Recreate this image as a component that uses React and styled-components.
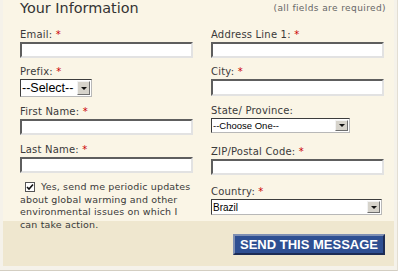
import React from 'react';
import styled, {createGlobalStyle} from 'styled-components';

const GlobalStyle = createGlobalStyle`
	body {
		margin: 0;
		background: #fff;
		font-family: "DejaVu Sans", Verdana, sans-serif;
	}
`;

const Panel = styled.div`
	width: 398px;
	box-sizing: border-box;
	background: #f5f2ea;
	padding: 0 3px 4px 3px;
	border-right: 1px solid #e3ded2;
	border-bottom: 1px solid #d3cec2;
`;

const Main = styled.div`
	background: #faf5e6;
	padding: 0 0 0 17px;
`;

const Header = styled.div`
	display: flex;
	justify-content: space-between;
	align-items: flex-start;
	height: 29px;
	padding-right: 8px;
`;

const Title = styled.h1`
	margin: 1px 0 0 0;
	font-size: 14.4px;
	font-weight: normal;
	line-height: 14px;
	color: #333;
`;

const Note = styled.span`
	font-size: 9px;
	letter-spacing: 0.4px;
	line-height: 12px;
	margin-top: 2px;
	color: #666;
`;

const Columns = styled.div`
	display: grid;
	grid-template-columns: 173px 172px;
	column-gap: 18px;
	align-items: start;
`;

const Column = styled.div`
	display: flex;
	flex-direction: column;
`;

const Field = styled.div`
	display: flex;
	flex-direction: column;
	margin-top: ${p => p.$gap || 0}px;
`;

const Label = styled.label`
	font-size: 10px;
	line-height: 12px;
	letter-spacing: 0.2px;
	color: #3a3a3a;
	margin-bottom: 1px;
`;

const Req = styled.span`
	color: #cc0000;
`;

const TextInput = styled.input`
	box-sizing: border-box;
	width: ${p => p.$width || 173}px;
	height: ${p => p.$height || 16}px;
	margin: 0;
	padding: 0 2px;
	background: #fff;
	border-style: solid;
	border-width: 2px;
	border-color: #5e5e5e #e2e2e2 #e2e2e2 #5e5e5e;
	font: 11px "Liberation Sans", Arial, sans-serif;
`;

const SelectBox = styled.div`
	box-sizing: border-box;
	display: flex;
	width: ${p => p.$width}px;
	height: ${p => p.$height}px;
	background: #fff;
	border-style: solid;
	border-width: 1px;
	border-color: #3c3c3c #b8b8b8 #b8b8b8 #3c3c3c;
`;

const Select = styled.select`
	appearance: none;
	flex: 1;
	min-width: 0;
	border: 0;
	margin: 0;
	padding: 0 0 0 1px;
	background: transparent;
	font-family: "Liberation Sans", Arial, sans-serif;
	font-size: ${p => p.$size}px;
	color: #000;
	outline: none;
`;

const Arrow = styled.span`
	box-sizing: border-box;
	display: flex;
	align-items: center;
	justify-content: center;
	width: 13px;
	margin: 1px;
	background: #d6d3cb;
	border-style: solid;
	border-width: 1px;
	border-color: #f2f2f2 #6e6e6e #6e6e6e #f2f2f2;
`;

const Caret = styled.span`
	width: 0;
	height: 0;
	border-left: 3px solid transparent;
	border-right: 3px solid transparent;
	border-top: 3px solid #111;
`;

const Consent = styled.label`
	display: block;
	margin-top: 8px;
	width: 174px;
	font-size: 9.5px;
	line-height: 12.5px;
	letter-spacing: 0.15px;
	color: #3a3a3a;
`;

const Check = styled.span`
	display: inline-block;
	vertical-align: -1px;
	box-sizing: border-box;
	width: 10px;
	height: 10px;
	margin: 0 6px 0 5px;
	background: #fff;
	border: 1px solid #555;
	line-height: 0;

	svg {
		width: 8px;
		height: 8px;
	}
`;

const Footer = styled.div`
	margin-top: -10px;
	height: 45px;
	background: #efe7cf;
	display: flex;
	align-items: center;
	justify-content: flex-end;
	padding-right: 9px;
`;

const SendButton = styled.button`
	box-sizing: border-box;
	height: 21px;
	width: 152px;
	margin: 1px 0 0 0;
	padding: 0;
	background: #2e4f92;
	color: #fff;
	font: bold 13px "Liberation Sans", Arial, sans-serif;
	border-style: solid;
	border-width: 2px;
	border-color: #7e8fb3 #1c2c55 #1c2c55 #7e8fb3;
	cursor: pointer;
`;

function DropDown({width, height, size, value, options}) {
	return (
		<SelectBox $width={width} $height={height}>
			<Select $size={size} defaultValue={value}>
				{options.map(o => <option key={o}>{o}</option>)}
			</Select>
			<Arrow><Caret/></Arrow>
		</SelectBox>
	);
}

function Text({label, req = true, gap, height}) {
	return (
		<Field $gap={gap}>
			<Label>{label} {req && <Req>*</Req>}</Label>
			<TextInput type="text" $height={height}/>
		</Field>
	);
}

export default function App() {
	return (
		<>
			<GlobalStyle/>
			<Panel>
				<Main>
					<Header>
						<Title>Your Information</Title>
						<Note>(all fields are required)</Note>
					</Header>
					<Columns>
						<Column>
							<Text label="Email:" gap={0}/>
							<Field $gap={8}>
								<Label>Prefix: <Req>*</Req></Label>
								<DropDown width={72} height={18} size={12.5} value="--Select--" options={['--Select--', 'Mr.', 'Ms.', 'Mrs.', 'Dr.']}/>
							</Field>
							<Text label="First Name:" gap={9}/>
							<Text label="Last Name:" gap={9}/>
							<Consent>
								<Check>
									<svg viewBox="0 0 8 8"><path d="M1 4 L3 6 L7 1.5" stroke="#111" strokeWidth="1.6" fill="none"/></svg>
								</Check>
								Yes, send me periodic updates about global warming and other environmental issues on which I can take action.
							</Consent>
						</Column>
						<Column>
							<Text label="Address Line 1:" gap={0}/>
							<Text label="City:" gap={8} height={17}/>
							<Field $gap={9}>
								<Label>State/ Province:</Label>
								<DropDown width={139} height={15} size={9.5} value="--Choose One--" options={['--Choose One--', 'Acre', 'Bahia', 'São Paulo']}/>
							</Field>
							<Text label="ZIP/Postal Code:" gap={13}/>
							<Field $gap={11}>
								<Label>Country: <Req>*</Req></Label>
								<DropDown width={171} height={16} size={10} value="Brazil" options={['Brazil', 'Argentina', 'Chile', 'Peru']}/>
							</Field>
						</Column>
					</Columns>
				</Main>
				<Footer>
					<SendButton type="button">SEND THIS MESSAGE</SendButton>
				</Footer>
			</Panel>
		</>
	);
}
